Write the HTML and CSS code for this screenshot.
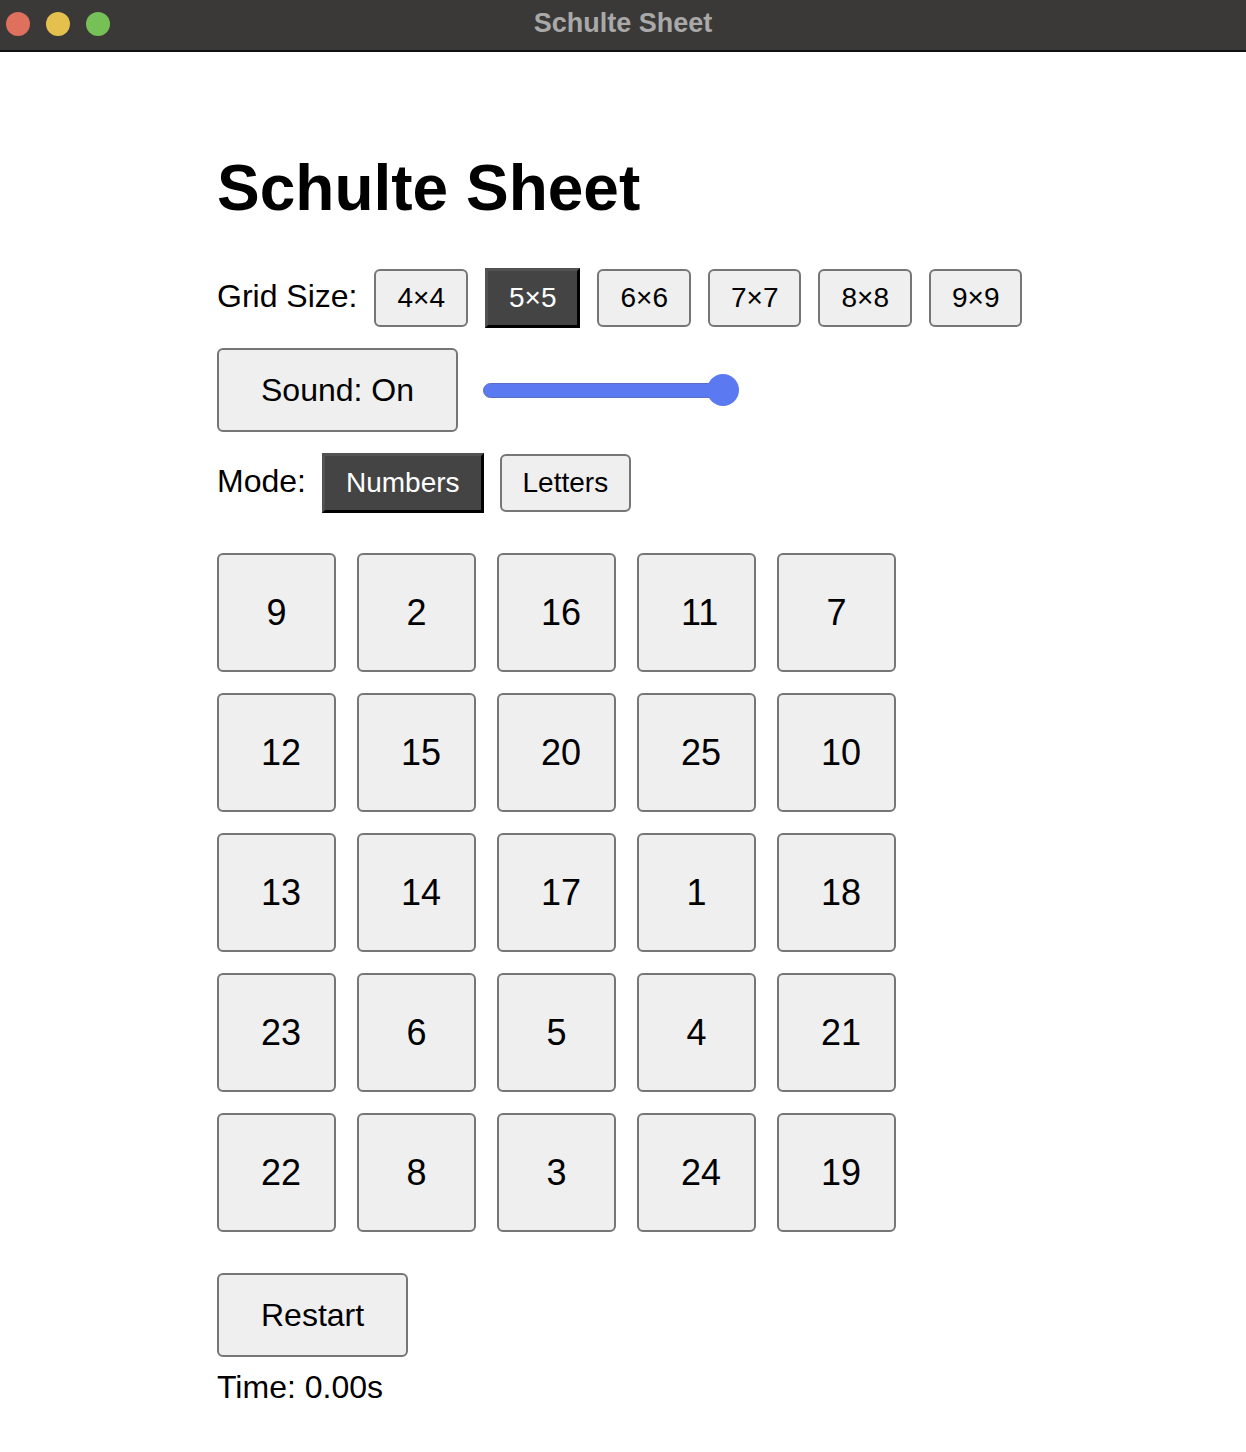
FILE: index.html
```html
<!DOCTYPE html>
<html lang="en">
<head>
<meta charset="utf-8">
<title>Schulte Sheet</title>
<link rel="stylesheet" href="styles.css">
</head>
<body>
<div class="titlebar">
  <div class="lights">
    <span class="light red"></span>
    <span class="light yellow"></span>
    <span class="light green"></span>
  </div>
  <div class="wintitle">Schulte Sheet</div>
  <div></div>
</div>
<main class="page">
  <h1 class="heading">Schulte Sheet</h1>
  <div class="row row-size">
    <span class="label">Grid Size:</span>
    <button class="btn small">4×4</button>
    <button class="btn small active">5×5</button>
    <button class="btn small">6×6</button>
    <button class="btn small">7×7</button>
    <button class="btn small">8×8</button>
    <button class="btn small">9×9</button>
  </div>
  <div class="row row-sound">
    <button class="btn big">Sound: On</button>
    <svg class="slider" width="258" height="32" viewBox="0 0 258 32">
      <rect x="0.5" y="9.5" width="250" height="14" rx="7" fill="#5b79f1" stroke="#5a6ec8" stroke-width="1"/>
      <circle cx="240" cy="16" r="16" fill="#5b79f1"/>
    </svg>
  </div>
  <div class="row row-mode">
    <span class="label">Mode:</span>
    <button class="btn small active">Numbers</button>
    <button class="btn small">Letters</button>
  </div>
  <div class="grid">
    <div class="cell">9</div><div class="cell">2</div><div class="cell">16</div><div class="cell">11</div><div class="cell">7</div>
    <div class="cell">12</div><div class="cell">15</div><div class="cell">20</div><div class="cell">25</div><div class="cell">10</div>
    <div class="cell">13</div><div class="cell">14</div><div class="cell">17</div><div class="cell">1</div><div class="cell">18</div>
    <div class="cell">23</div><div class="cell">6</div><div class="cell">5</div><div class="cell">4</div><div class="cell">21</div>
    <div class="cell">22</div><div class="cell">8</div><div class="cell">3</div><div class="cell">24</div><div class="cell">19</div>
  </div>
  <div class="restart-row">
    <button class="btn big">Restart</button>
  </div>
  <div class="time">Time: 0.00s</div>
</main>
</body>
</html>
```

FILE: styles.css
```css
html, body {
  margin: 0;
  padding: 0;
  background: #ffffff;
}

body {
  font-family: "Liberation Sans", Arial, Helvetica, sans-serif;
  color: #000;
}

.titlebar {
  height: 50px;
  background: #3a3938;
  border-bottom: 2px solid #111;
  display: grid;
  grid-template-columns: 1fr auto 1fr;
  align-items: center;
}

.lights {
  display: flex;
  gap: 16px;
  padding-left: 6px;
  margin-top: -3px;
}

.light {
  width: 24px;
  height: 24px;
  border-radius: 50%;
  display: block;
}

.red { background: #de705d; }
.yellow { background: #e6c04e; }
.green { background: #76c157; }

.wintitle {
  font-weight: bold;
  font-size: 27px;
  color: #a9a9a9;
  margin-top: -3px;
}

.page {
  padding-left: 217px;
}

.heading {
  margin: 104px 0 0 0;
  font-size: 64px;
  line-height: 64px;
  font-weight: bold;
}

.row {
  display: flex;
}

.row-size {
  margin-top: 48px;
  align-items: baseline;
  gap: 17px;
}

.row-sound {
  margin-top: 20px;
  align-items: center;
  gap: 25px;
}

.row-mode {
  margin-top: 21px;
  align-items: baseline;
  gap: 16px;
}

.label {
  font-size: 32px;
  line-height: 37px;
}

.btn {
  font-family: inherit;
  color: #000;
  background: #efefef;
  border: 2px solid #767676;
  border-radius: 6px;
  margin: 0;
  cursor: pointer;
}

.btn.small {
  font-size: 28px;
  line-height: 32px;
  padding: 11px 21px;
}

.btn.big {
  font-size: 32px;
  line-height: 40px;
  padding: 20px 42px;
}

.btn.active {
  background: #444444;
  color: #ffffff;
  border-radius: 0;
  border-width: 3px;
  border-style: solid;
  border-color: #525252 #000000 #000000 #525252;
}

.slider {
  display: block;
}

.grid {
  margin-top: 40px;
  display: grid;
  grid-template-columns: repeat(5, 119px);
  grid-auto-rows: 119px;
  gap: 21px;
}

.cell {
  box-sizing: border-box;
  width: 119px;
  height: 119px;
  background: #efefef;
  border: 2px solid #767676;
  border-radius: 6px;
  padding: 0 42px;
  font-size: 36px;
  line-height: 115px;
  text-align: center;
  white-space: nowrap;
}

.restart-row {
  margin-top: 41px;
  display: flex;
}

.time {
  margin-top: 10px;
  font-size: 32px;
  line-height: 40px;
}
```
